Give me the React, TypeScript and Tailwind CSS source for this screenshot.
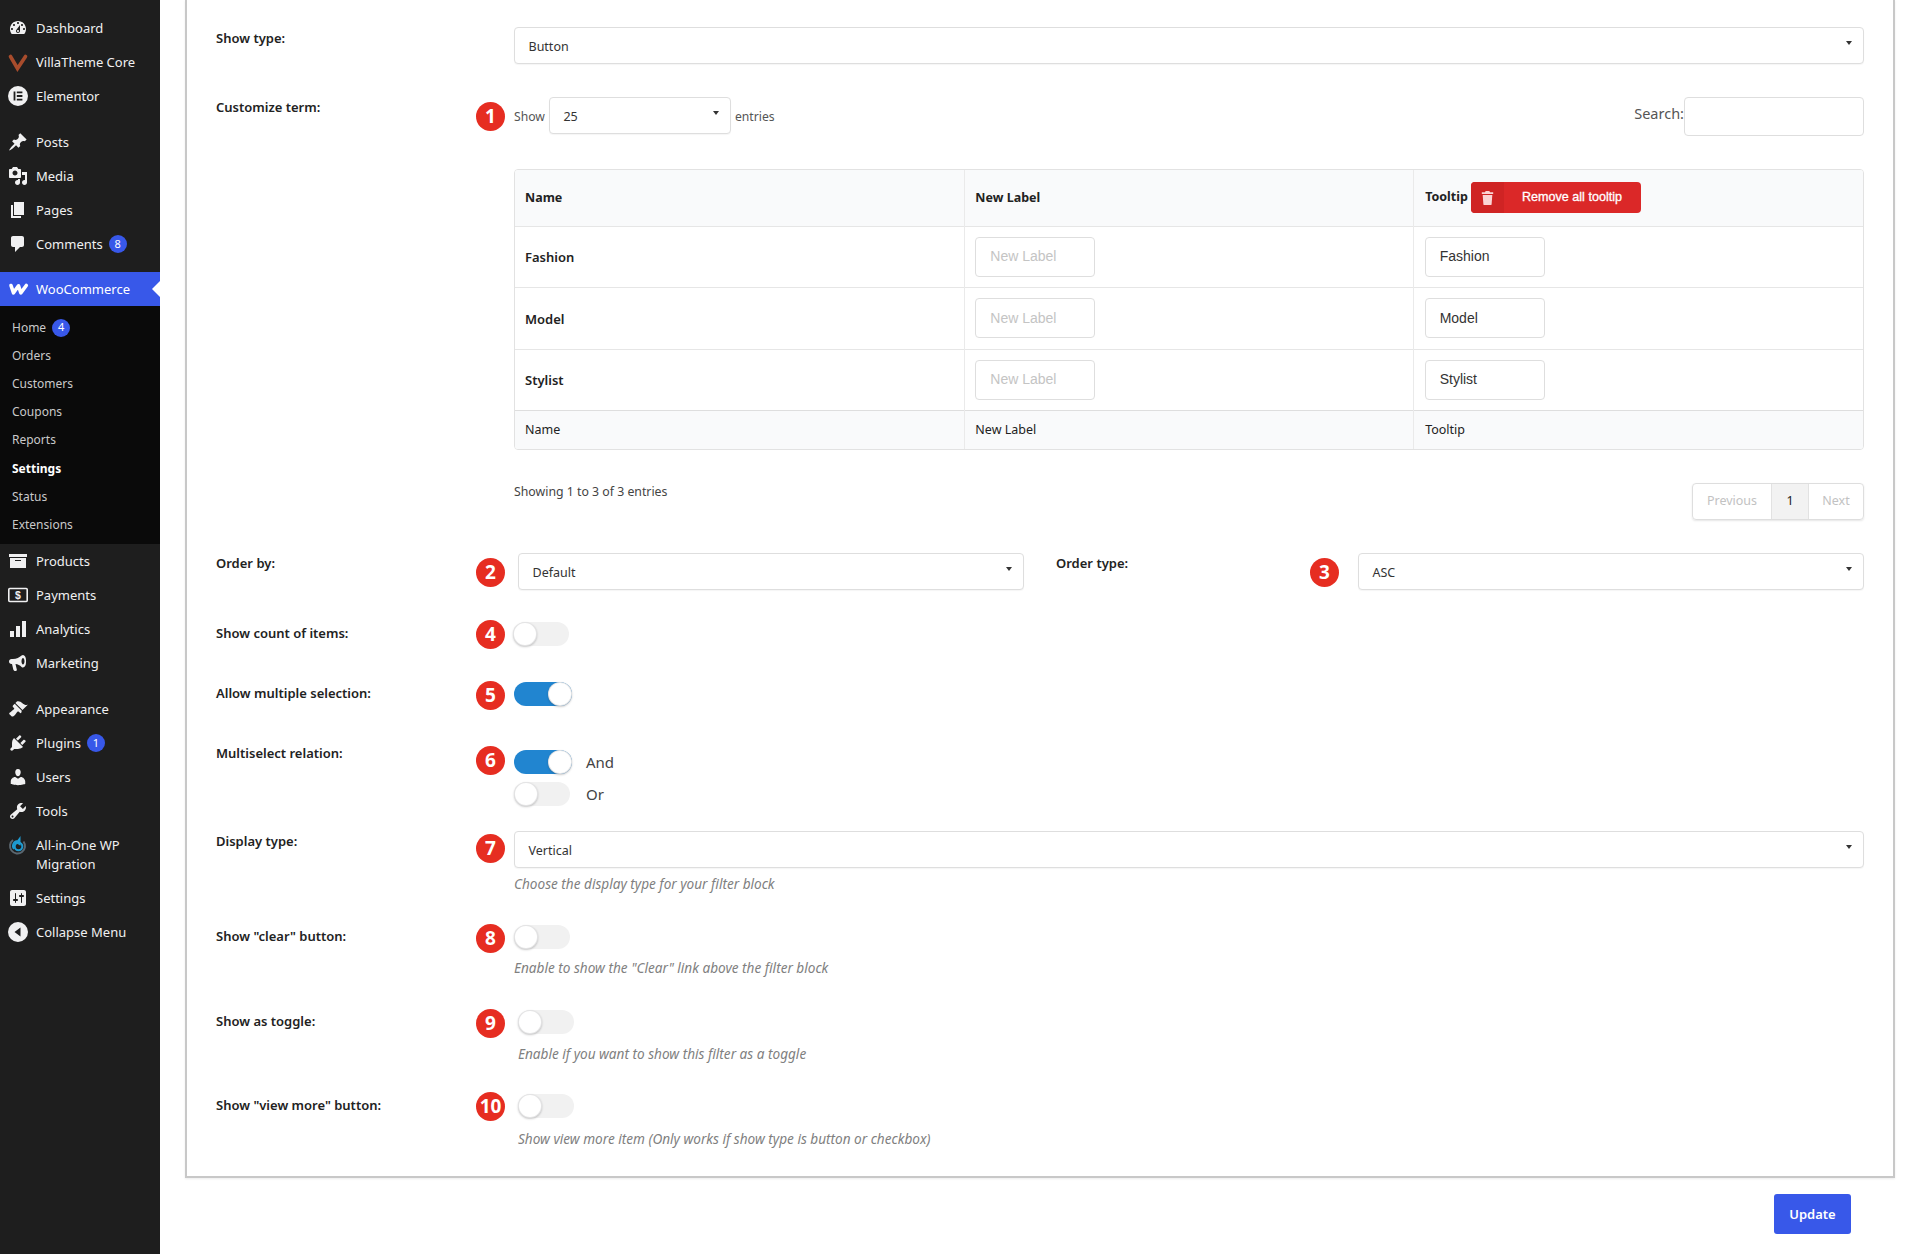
import React from "react";

const paths = {
  dashboard:
    "M3.76 16h12.48c1.1-1.37 1.76-3.11 1.76-5 0-4.42-3.58-8-8-8s-8 3.58-8 8c0 1.89.66 3.63 1.76 5zM10 4c.55 0 1 .45 1 1s-.45 1-1 1-1-.45-1-1 .45-1 1-1zM6 6c.55 0 1 .45 1 1s-.45 1-1 1-1-.45-1-1 .45-1 1-1zm8 0c.55 0 1 .45 1 1s-.45 1-1 1-1-.45-1-1 .45-1 1-1zm-5.37 5.55L12 7v6c0 1.1-.9 2-2 2s-2-.9-2-2c0-.57.24-1.08.63-1.45zM4 10c.55 0 1 .45 1 1s-.45 1-1 1-1-.45-1-1 .45-1 1-1zm12 0c.55 0 1 .45 1 1s-.45 1-1 1-1-.45-1-1 .45-1 1-1zm-5 3c0-.55-.45-1-1-1s-1 .45-1 1 .45 1 1 1 1-.45 1-1z",
  posts:
    "M10.44 3.02l1.82-1.82 6.36 6.35-1.83 1.82c-1.05-.68-2.48-.57-3.41.36l-.75.75c-.92.93-1.04 2.35-.35 3.41l-1.83 1.82-2.41-2.41-2.8 2.79c-.42.42-3.38 2.71-3.8 2.29s1.86-3.39 2.28-3.81l2.79-2.79L4.1 9.36l1.83-1.82c1.05.69 2.48.57 3.4-.36l.75-.75c.93-.92 1.05-2.35.36-3.41z",
  media:
    "M13 11V4c0-.55-.45-1-1-1h-1.67L9 1H5L3.67 3H2c-.55 0-1 .45-1 1v7c0 .55.45 1 1 1h10c.55 0 1-.45 1-1zM7 4.5c1.38 0 2.5 1.12 2.5 2.5S8.38 9.5 7 9.5 4.5 8.38 4.5 7 5.62 4.5 7 4.5zM14 6h5v10.5c0 1.38-1.12 2.5-2.5 2.5S14 17.88 14 16.5s1.12-2.5 2.5-2.5c.17 0 .34.02.5.05V9h-3V6zm-4 8.05V13h2v3.5c0 1.38-1.12 2.5-2.5 2.5S7 17.88 7 16.5 8.12 14 9.5 14c.17 0 .34.02.5.05z",
  pages: "M6 15V2h10v13H6zm-1 1h8v2H3V5h2v11z",
  comments:
    "M5 2h9c1.1 0 2 .9 2 2v7c0 1.1-.9 2-2 2h-2l-5 5v-5H5c-1.1 0-2-.9-2-2V4c0-1.1.9-2 2-2z",
  products: "M19 3v3H1V3h18zM2 7h16v10H2V7zm11 3V9H7v1h6z",
  analytics: "M18 18V2h-4v16h4zm-6 0V7H8v11h4zm-6 0v-6H2v6h4z",
  marketing:
    "M18 7c0-2.8-1.3-5-3-5-.5 0-1 .2-1.400.6C11.500 4.500 8.500 6 5 6H3.500C2.100 6 1 7.100 1 8.500S2.100 11 3.500 11H4l1.300 5.500c.2.900 1 1.500 1.900 1.500h.6c.8 0 1.300-.8 1-1.500L7.500 11.100c2.300.3 4.500 1.400 6.100 2.900.4.4.900.600 1.400.600 1.700 0 3-2.200 3-5V7zm-3 4.500c-.8 0-1.500-1.200-1.500-3.200S14.200 5 15 5s1.500 1.300 1.500 3.300-.7 3.200-1.500 3.200z",
  appearance:
    "M14.480 11.060L7.410 3.990l1.500-1.500c.5-.56 2.300-.47 3.510.32 1.210.8 1.430 1.280 2.910 2.100 1.180.64 2.450 1.260 4.450.85zm-.71.71L6.700 4.700 4.930 6.470c-.39.39-.39 1.020 0 1.410l1.060 1.060c.39.39.39 1.030 0 1.420-.6.6-1.430 1.110-2.210 1.690-.35.26-.7.53-1.010.84C1.430 13.230.79 14.560 1.460 15.240l2.080 2.080c.68.67 2 .03 3.350-1.310.31-.31.58-.66.84-1.010.58-.78 1.090-1.610 1.690-2.210.39-.39 1.030-.39 1.420 0l1.060 1.060c.39.39 1.020.39 1.410 0z",
  plugins:
    "M13.110 4.360L9.870 7.600 8 5.730l3.240-3.240c.35-.34 1.050-.2 1.560.32.52.51.66 1.210.31 1.550zm-8 1.770l.91-1.120 9.010 9.010-1.190.84c-.71.71-2.630 1.160-3.820 1.160H6.140L4.900 17.260c-.59.59-1.540.59-2.120 0-.59-.58-.59-1.530 0-2.120l1.240-1.240v-3.880c0-1.130.4-3.190 1.090-3.890zm7.260 3.970l3.240-3.240c.34-.35 1.040-.21 1.550.31.52.51.66 1.210.31 1.550l-3.240 3.250z",
  users:
    "M10 9.250c-2.270 0-2.730-3.440-2.730-3.440C7 4.020 7.820 2 9.970 2c2.160 0 2.980 2.020 2.710 3.810 0 0-.41 3.440-2.680 3.440zm0 2.570L12.720 10c2.390 0 4.520 2.330 4.520 4.530v2.490s-3.650 1.130-7.240 1.130c-3.650 0-7.240-1.130-7.240-1.130v-2.490c0-2.250 1.940-4.480 4.470-4.480z",
  tools:
    "M16.680 9.770c-1.340 1.340-3.300 1.670-4.950.99l-5.410 6.520c-.99.99-2.590.99-3.580 0s-.99-2.590 0-3.570l6.520-5.420c-.68-1.650-.35-3.610.99-4.950 1.280-1.280 3.120-1.620 4.720-1.060l-2.890 2.890 2.820 2.820 2.860-2.870c.53 1.580.18 3.390-1.080 4.650zM3.810 16.210c.4.39 1.040.39 1.430 0 .4-.4.4-1.040 0-1.430-.39-.4-1.030-.4-1.430 0-.39.39-.39 1.030 0 1.430z",
  settings:
    "M18 16V4c0-1.100-.9-2-2-2H4c-1.100 0-2 .9-2 2v12c0 1.100.9 2 2 2h12c1.100 0 2-.9 2-2zM8 11h1c.55 0 1 .45 1 1s-.45 1-1 1H8v1.500c0 .28-.22.5-.5.5s-.5-.22-.5-.5V13H6c-.55 0-1-.45-1-1s.45-1 1-1h1V5.500c0-.28.22-.5.5-.5s.5.22.5.5V11zm5-2h-1c-.55 0-1-.45-1-1s.45-1 1-1h1V5.500c0-.28.22-.5.5-.5s.5.22.5.5V7h1c.55 0 1 .45 1 1s-.45 1-1 1h-1v5.500c0 .28-.22.5-.5.5s-.5-.22-.5-.5V9z",
  collapse:
    "M10 0a10 10 0 1 0 0 20 10 10 0 0 0 0-20zM12.500 14.500 6.500 10l6-4.500v9z",
  elementor:
    "M10 0a10 10 0 1 0 0 20 10 10 0 0 0 0-20zM7.400 14.500H5.600V5.500h1.800v9zm7 0H8.800v-1.800h5.600v1.800zm0-3.600H8.800V9.100h5.600v1.800zm0-3.600H8.800V5.500h5.600v1.800z",
};

function Dash({ d, className = "h-5 w-5" }: { d: string; className?: string }) {
  return (
    <svg viewBox="0 0 20 20" fill="currentColor" fillRule="evenodd" className={className}>
      <path d={d} />
    </svg>
  );
}

const WooIcon = () => (
  <svg viewBox="0 0 20 20" className="h-5 w-[21px]" fill="none" stroke="white" strokeWidth="3.600" strokeLinejoin="round" strokeLinecap="round">
    <path d="M2.500 6.500 5 13.800 10 6.800 12.300 13.800 17.800 6.500" />
  </svg>
);

const VillaIcon = () => (
  <svg viewBox="0 0 20 20" className="h-5 w-5" fill="none" stroke="#a84c2c" strokeWidth="3.600" strokeLinecap="round">
    <path d="M2.500 4.500 9.500 16.500 17.500 4.500" />
  </svg>
);

const PaymentsIcon = () => (
  <svg viewBox="0 0 20 20" className="h-5 w-5">
    <rect x="0.800" y="3.500" width="18.400" height="13" rx="1" fill="none" stroke="currentColor" strokeWidth="1.600" />
    <text x="10" y="14.200" textAnchor="middle" fontSize="10.500" fontWeight="700" fill="currentColor" fontFamily="'Liberation Sans', sans-serif">$</text>
  </svg>
);

const MigrationIcon = () => (
  <svg viewBox="0 0 20 20" className="h-5 w-5" fill="none">
    <path d="M15.500 5.500A7.500 7.500 0 1 1 5 4" stroke="#5b6770" strokeWidth="2" />
    <path d="M6 13a5 5 0 0 1 4-8l1.500-2v5L8 6" stroke="#1e9bd1" strokeWidth="2" />
    <circle cx="10.500" cy="10.500" r="3.800" stroke="#1e9bd1" strokeWidth="2" />
  </svg>
);

type Item = { label: React.ReactNode; icon: React.ReactNode; badge?: string; two?: boolean };

const group1: Item[] = [
  { label: "Dashboard", icon: <Dash d={paths.dashboard} /> },
  { label: "VillaTheme Core", icon: <VillaIcon /> },
  { label: "Elementor", icon: <Dash d={paths.elementor} /> },
];
const group2: Item[] = [
  { label: "Posts", icon: <Dash d={paths.posts} /> },
  { label: "Media", icon: <Dash d={paths.media} /> },
  { label: "Pages", icon: <Dash d={paths.pages} /> },
  { label: "Comments", icon: <Dash d={paths.comments} />, badge: "8" },
];
const group3: Item[] = [
  { label: "Products", icon: <Dash d={paths.products} /> },
  { label: "Payments", icon: <PaymentsIcon /> },
  { label: "Analytics", icon: <Dash d={paths.analytics} /> },
  { label: "Marketing", icon: <Dash d={paths.marketing} /> },
];
const group4: Item[] = [
  { label: "Appearance", icon: <Dash d={paths.appearance} /> },
  { label: "Plugins", icon: <Dash d={paths.plugins} />, badge: "1" },
  { label: "Users", icon: <Dash d={paths.users} /> },
  { label: "Tools", icon: <Dash d={paths.tools} /> },
  { label: <>All-in-One WP<br />Migration</>, icon: <MigrationIcon />, two: true },
  { label: "Settings", icon: <Dash d={paths.settings} /> },
  { label: "Collapse Menu", icon: <Dash d={paths.collapse} /> },
];
const subItems = ["Home", "Orders", "Customers", "Coupons", "Reports", "Settings", "Status", "Extensions"];

const Count = ({ n }: { n: string }) => (
  <span className="ml-[6px] flex h-[18px] w-[18px] items-center justify-center rounded-full bg-[#3858e9] text-[11px] text-white">
    {n}
  </span>
);

function MenuRow({ item }: { item: Item }) {
  return (
    <div className={`flex items-center text-[#f0f0f1] ${item.two ? "h-[53px]" : "h-[34px]"}`}>
      <span className={`flex w-[36px] justify-center ${item.two ? "-mt-[18px]" : ""}`}>{item.icon}</span>
      <span className="leading-[19px]">{item.label}</span>
      {item.badge && <Count n={item.badge} />}
    </div>
  );
}

function Sidebar() {
  return (
    <aside className="w-[160px] shrink-0 bg-[#1e1e1e] pt-[11px] text-[13px]">
      {group1.map((i, k) => <MenuRow key={k} item={i} />)}
      <div className="h-[12px]" />
      {group2.map((i, k) => <MenuRow key={k} item={i} />)}
      <div className="h-[11px]" />
      <div className="flex h-[34px] items-center bg-[#3858e9] text-white">
        <span className="flex w-[36px] justify-center"><WooIcon /></span>
        <span className="pt-[1px]">WooCommerce</span>
        <span className="ml-auto h-0 w-0 border-y-[8px] border-r-[8px] border-y-transparent border-r-white" />
      </div>
      <div className="h-[238px] bg-[#0a0a0a] pl-[12px] pt-[7.500px] text-[12px] text-[#c9c9c9]">
        {subItems.map((s) => (
          <div key={s} className={`flex h-[28.2px] items-center ${s === "Settings" ? "font-bold text-white" : ""}`}>
            {s}
            {s === "Home" && <Count n="4" />}
          </div>
        ))}
      </div>
      {group3.map((i, k) => <MenuRow key={k} item={i} />)}
      <div className="h-[12px]" />
      {group4.map((i, k) => <MenuRow key={k} item={i} />)}
    </aside>
  );
}

const Badge = ({ n }: { n?: number }) =>
  n ? (
    <span className="flex h-[29px] w-[29px] shrink-0 items-center justify-center rounded-full bg-[#e62d21] text-[19px] font-bold leading-none text-white">
      {n}
    </span>
  ) : (
    <span className="h-[29px] w-[29px] shrink-0" />
  );

const Caret = () => (
  <span className="h-0 w-0 border-x-[3.5px] border-t-[4px] border-x-transparent border-t-[#333]" />
);

function Select({ value, className = "" }: { value: string; className?: string }) {
  return (
    <div className={`flex h-[37px] items-start justify-between rounded border border-[#dedede] bg-white pl-[13.500px] pr-[11px] text-[12.500px] text-[#333] shadow-[0_1px_1px_rgba(0,0,0,0.04)] ${className}`}>
      <span className="mt-[9px] leading-[20px]">{value}</span>
      <span className="mt-[13px] flex"><Caret /></span>
    </div>
  );
}

function Toggle({ on = false, className = "" }: { on?: boolean; className?: string }) {
  return (
    <div className={`flex h-[24px] rounded-full ${on ? "w-[58px] justify-end bg-[#2185d0]" : "w-[56px] bg-[#f1f1f1]"} ${className}`}>
      <span className="h-[24px] w-[24px] rounded-full bg-white shadow-[0_1px_2px_rgba(34,36,38,0.25),0_0_0_1px_rgba(34,36,38,0.12)_inset]" />
    </div>
  );
}

const Label = ({ children, mt }: { children: React.ReactNode; mt: string }) => (
  <div className={`w-[260px] shrink-0 text-[13px] font-semibold leading-[20px] text-[#222] ${mt}`}>{children}</div>
);

const Help = ({ children, className = "" }: { children: React.ReactNode; className?: string }) => (
  <p className={`text-[13.600px] italic leading-[20px] text-[#808080] ${className}`}>{children}</p>
);

const TextBox = ({ value, placeholder }: { value?: string; placeholder?: string }) => (
  <div className={`flex h-[40px] w-[120px] items-center rounded border border-[#dedede] bg-white font-['Liberation_Sans',sans-serif] text-[14px] ${value ? "pl-[13.500px] text-[#333]" : "pl-[14.500px] text-[#c4c4c4]"}`}>
    {value ?? placeholder}
  </div>
);

function TermsTable() {
  const rows = [
    { name: "Fashion", h: "h-[61px]", pt: "pt-[2px]" },
    { name: "Model", h: "h-[62px]", pt: "pt-[3px]" },
    { name: "Stylist", h: "h-[61px]", pt: "pt-[2px]" },
  ];
  return (
    <div className="mt-[33px] overflow-hidden rounded border border-[#e2e2e2]">
      <table className="w-full table-fixed border-collapse text-[13px] text-[#222]">
        <thead>
          <tr className="h-[56px] bg-[#f9fafb] text-[12.500px]">
            <th className="pl-[10px] pt-[1px] text-left font-bold">Name</th>
            <th className="border-l border-[#eaeaea] pl-[10.500px] pt-[1px] text-left font-bold">New Label</th>
            <th className="border-l border-[#eaeaea] pl-[11px] text-left font-bold">
              <div className="flex items-center">
                Tooltip
                <button className="ml-[3px] flex h-[31px] w-[170px] items-center overflow-hidden rounded bg-[#db2828] font-['Liberation_Sans',sans-serif] text-[12.600px] font-normal text-white [-webkit-text-stroke:0.3px_white]">
                  <span className="flex h-full w-[33px] items-center justify-center bg-[#cf2424]">
                    <svg viewBox="0 0 14 16" className="h-[14px] w-[13px]" fill="#fbd5d5">
                      <path d="M5 0h4l1 1.500h3.500v2H.500v-2H4L5 0zM1.500 4.500h11L11.700 15c0 .6-.5 1-1 1H3.300c-.5 0-1-.4-1-1L1.500 4.500z" />
                    </svg>
                  </span>
                  <span className="ml-[18px]">Remove all tooltip</span>
                </button>
              </div>
            </th>
          </tr>
        </thead>
        <tbody>
          {rows.map((r) => (
            <tr key={r.name} className={`${r.h} border-t border-[#e6e6e6]`}>
              <td className={`pl-[10px] font-semibold ${r.pt}`}>{r.name}</td>
              <td className="border-l border-[#eaeaea] pl-[10px]"><TextBox placeholder="New Label" /></td>
              <td className="border-l border-[#eaeaea] pl-[11px]"><TextBox value={r.name} /></td>
            </tr>
          ))}
        </tbody>
        <tfoot>
          <tr className="h-[39px] border-t border-[#dedede] bg-[#f9fafb] text-[12.500px]">
            <td className="pl-[10px] pt-[1px]">Name</td>
            <td className="border-l border-[#eaeaea] pl-[10.500px] pt-[1px]">New Label</td>
            <td className="border-l border-[#eaeaea] pl-[11px] pt-[1px]">Tooltip</td>
          </tr>
        </tfoot>
      </table>
    </div>
  );
}

function Pagination() {
  return (
    <div className="flex h-[37px] w-[172px] overflow-hidden rounded border border-[#dedede] text-[12.500px] text-[#c2c2c2] shadow-[0_1px_2px_rgba(0,0,0,0.1)]">
      <span className="flex w-[78px] items-center justify-center">Previous</span>
      <span className="flex w-[38px] items-center justify-center border-x border-[#e2e2e2] bg-[#f2f2f2] text-[#222]">1</span>
      <span className="flex flex-1 items-center justify-center">Next</span>
    </div>
  );
}

function SettingsPanel() {
  return (
    <section className="h-[1178px] border-x-2 border-b-2 border-[#c8c8c8] pl-[29px] pr-[29px] shadow-[0_1px_2px_rgba(0,0,0,0.08)]">
      {/* Show type */}
      <div className="flex pt-[27px]">
        <Label mt="mt-[1px]">Show type:</Label>
        <Badge />
        <Select value="Button" className="ml-[9px] flex-1" />
      </div>

      {/* Customize term */}
      <div className="mt-[33px] flex">
        <Label mt="mt-0">Customize term:</Label>
        <div className="mt-[5px]"><Badge n={1} /></div>
        <div className="ml-[9px] w-[1350px]">
          <div className="flex h-[39px] items-start text-[12.200px] text-[#555]">
            <span className="mt-[10px] leading-[20px]">Show</span>
            <Select value="25" className="ml-[4px] w-[182px]" />
            <span className="ml-[4px] mt-[10px] leading-[20px]">entries</span>
            <span className="ml-auto mt-[6px] text-[14.500px] leading-[20px]">Search:</span>
            <div className="h-[39px] w-[180px] rounded border border-[#dedede]" />
          </div>
          <TermsTable />
          <div className="mt-[33px] flex items-start justify-between">
            <span className="-mt-[1px] text-[12.300px] leading-[20px] text-[#444]">Showing 1 to 3 of 3 entries</span>
            <Pagination />
          </div>
        </div>
      </div>

      {/* Order by / Order type */}
      <div className="mt-[33px] flex">
        <Label mt="mt-0">Order by:</Label>
        <div className="mt-[5px]"><Badge n={2} /></div>
        <Select value="Default" className="ml-[13px] w-[506px]" />
        <div className="ml-[32px] w-[254px] shrink-0 text-[13px] font-semibold leading-[20px] text-[#222]">Order type:</div>
        <div className="mt-[5px]"><Badge n={3} /></div>
        <Select value="ASC" className="ml-[19px] flex-1" />
      </div>

      {/* Show count */}
      <div className="mt-[30px] flex">
        <Label mt="mt-[3px]">Show count of items:</Label>
        <Badge n={4} />
        <Toggle className="ml-[8px] mt-[2px]" />
      </div>

      {/* Allow multiple */}
      <div className="mt-[32px] flex">
        <Label mt="mt-[2px]">Allow multiple selection:</Label>
        <Badge n={5} />
        <Toggle on className="ml-[9px] mt-[1px]" />
      </div>

      {/* Multiselect relation */}
      <div className="mt-[33px] flex">
        <Label mt="mt-0">Multiselect relation:</Label>
        <div className="mt-[3px]"><Badge n={6} /></div>
        <div className="ml-[9px] mt-[7px] text-[15px] text-[#444]">
          <div className="flex items-center gap-[14px]"><Toggle on /><span>And</span></div>
          <div className="mt-[8px] flex items-center gap-[16px]"><Toggle /><span>Or</span></div>
        </div>
      </div>

      {/* Display type */}
      <div className="mt-[25px] flex">
        <Label mt="mt-0">Display type:</Label>
        <div className="mt-[3px]"><Badge n={7} /></div>
        <div className="ml-[9px] flex-1">
          <Select value="Vertical" />
          <Help className="mt-[6px]">Choose the display type for your filter block</Help>
        </div>
      </div>

      {/* Show clear */}
      <div className="mt-[30px] flex">
        <Label mt="mt-[2px]">Show "clear" button:</Label>
        <Badge n={8} />
        <div className="ml-[9px] mt-[1px]">
          <Toggle />
          <Help className="mt-[9px]">Enable to show the "Clear" link above the filter block</Help>
        </div>
      </div>

      {/* Show as toggle */}
      <div className="mt-[31px] flex">
        <Label mt="mt-[2px]">Show as toggle:</Label>
        <Badge n={9} />
        <div className="ml-[13px] mt-[1px]">
          <Toggle />
          <Help className="mt-[10px]">Enable if you want to show this filter as a toggle</Help>
        </div>
      </div>

      {/* Show view more */}
      <div className="mt-[28px] flex">
        <Label mt="mt-[3px]">Show "view more" button:</Label>
        <Badge n={10} />
        <div className="ml-[13px] mt-[2px]">
          <Toggle />
          <Help className="mt-[11px]">Show view more item (Only works if show type is button or checkbox)</Help>
        </div>
      </div>
    </section>
  );
}

export default function App() {
  return (
    <div className="flex h-[1254px] w-[1905px] overflow-hidden bg-white font-['Noto_Sans',sans-serif]">
      <Sidebar />
      <main className="flex-1 pl-[25px] pr-[10px]">
        <SettingsPanel />
        <div className="flex justify-end pr-[44px] pt-[16px]">
          <button className="h-[40px] w-[77px] rounded-[3px] bg-[#3858e9] pt-[1px] text-[13px] font-semibold text-white">
            Update
          </button>
        </div>
      </main>
    </div>
  );
}
